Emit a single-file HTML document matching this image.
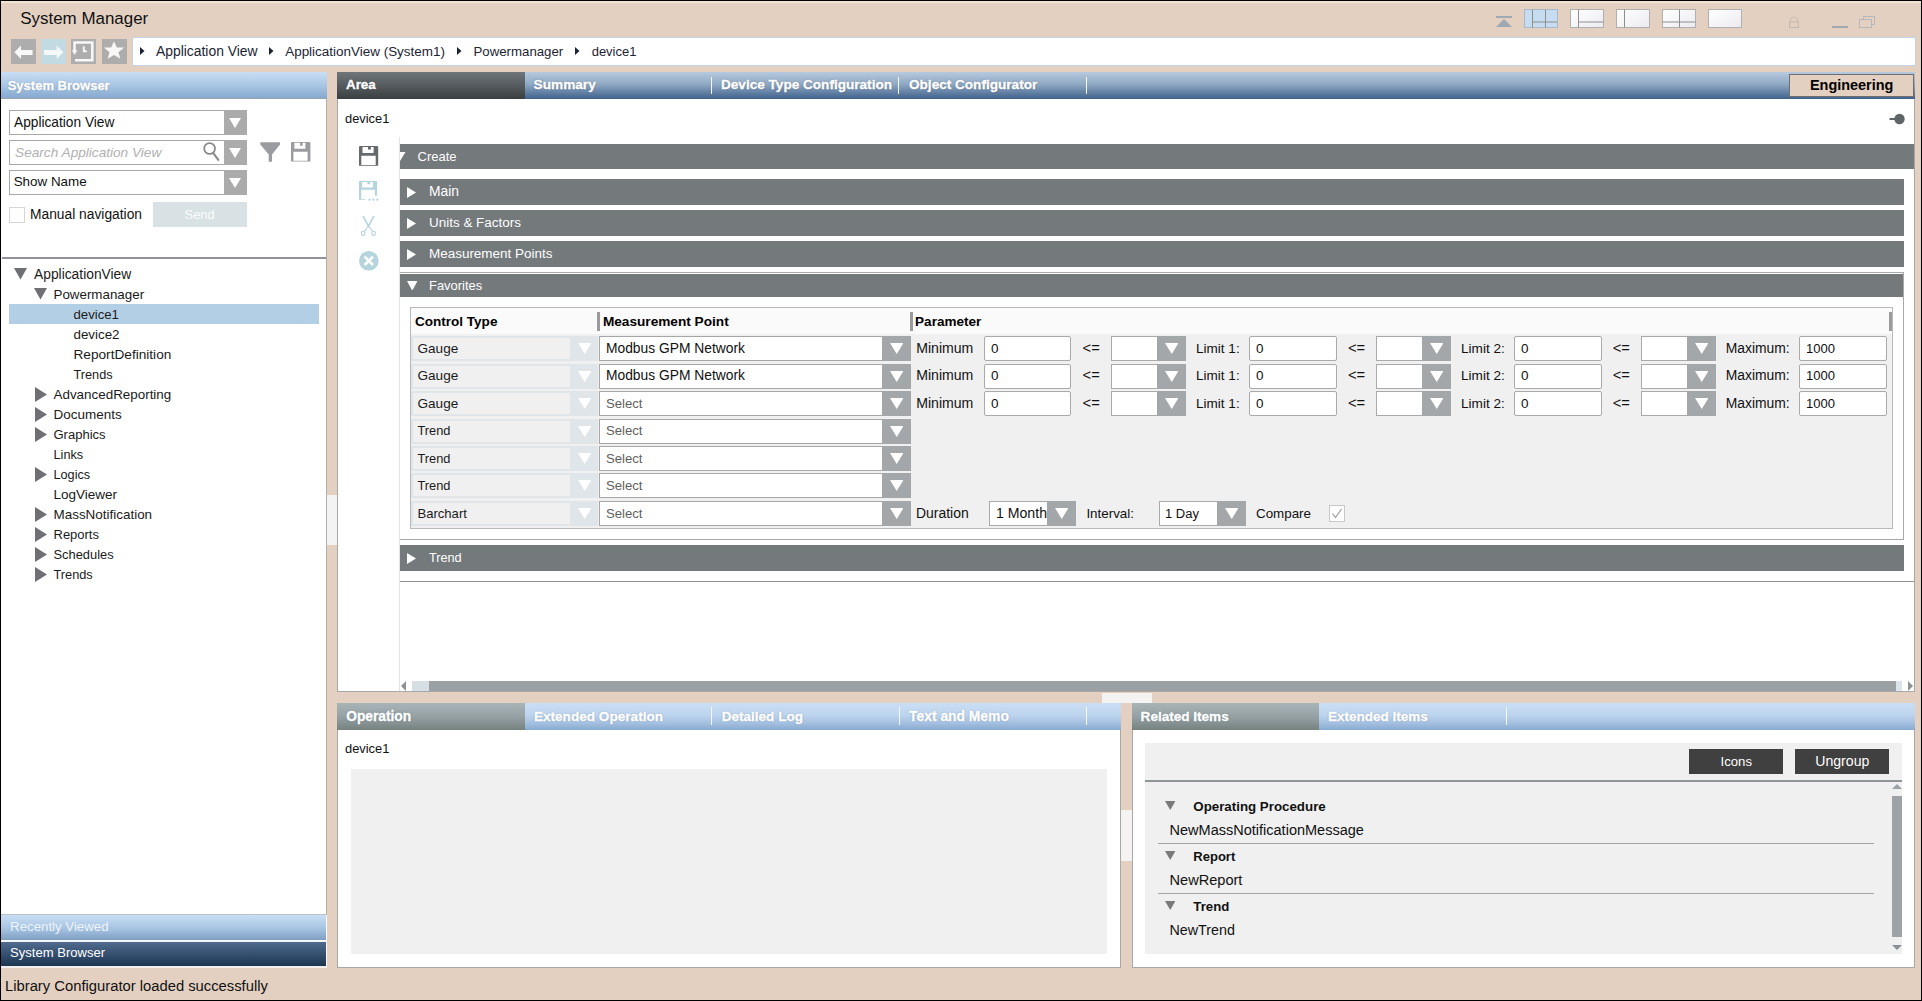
<!DOCTYPE html>
<html><head><meta charset="utf-8"><style>
*{box-sizing:border-box;margin:0;padding:0}
html,body{width:1922px;height:1001px;overflow:hidden}
body{position:relative;background:#e3d0c1;font-family:"Liberation Sans",sans-serif;font-size:14px;color:#1a1a1a}
.a{position:absolute;display:block}
.t{position:absolute;white-space:nowrap}
</style></head><body>
<div class="a" style="left:1px;top:1px;width:1920px;height:2px;background:#f2e2d4"></div>
<div class="t" style="left:20.3px;top:11px;font-size:16.93px;line-height:16.93px;color:#111;">System Manager</div>
<div class="a" style="left:1496px;top:16px;width:16px;height:2px;background:#9fa9b1"></div>
<svg class="a" style="left:1496px;top:19px;" width="16" height="8" viewBox="0 0 16 8"><polygon points="0,8 16,8 8,0" fill="#9fa9b1"/></svg>
<svg class="a" style="left:1524px;top:9px;" width="35" height="19" viewBox="0 0 35 19"><defs><linearGradient id="lg" x1="0" y1="0" x2="1" y2="1"><stop offset="0" stop-color="#ffffff"/><stop offset="1" stop-color="#eceaf0"/></linearGradient></defs><rect x="0.5" y="0.5" width="33" height="18" fill="#c6dcf0" stroke="#a9b9c9" stroke-width="1"/><g transform="translate(0.5,0.5)"><line x1="8" y1="0" x2="8" y2="18" stroke="#8e8e8e" stroke-width="1"/><line x1="21" y1="0" x2="21" y2="18" stroke="#8e8e8e" stroke-width="1"/><line x1="8" y1="12.5" x2="33" y2="12.5" stroke="#8e8e8e" stroke-width="1"/></g></svg>
<svg class="a" style="left:1570px;top:9px;" width="35" height="19" viewBox="0 0 35 19"><defs><linearGradient id="lg" x1="0" y1="0" x2="1" y2="1"><stop offset="0" stop-color="#ffffff"/><stop offset="1" stop-color="#eceaf0"/></linearGradient></defs><rect x="0.5" y="0.5" width="33" height="18" fill="url(#lg)" stroke="#b0b0b0" stroke-width="1"/><g transform="translate(0.5,0.5)"><line x1="8" y1="0" x2="8" y2="18" stroke="#8e8e8e" stroke-width="1"/><line x1="8" y1="12.5" x2="33" y2="12.5" stroke="#8e8e8e" stroke-width="1"/></g></svg>
<svg class="a" style="left:1616px;top:9px;" width="35" height="19" viewBox="0 0 35 19"><defs><linearGradient id="lg" x1="0" y1="0" x2="1" y2="1"><stop offset="0" stop-color="#ffffff"/><stop offset="1" stop-color="#eceaf0"/></linearGradient></defs><rect x="0.5" y="0.5" width="33" height="18" fill="url(#lg)" stroke="#b0b0b0" stroke-width="1"/><g transform="translate(0.5,0.5)"><line x1="8" y1="0" x2="8" y2="18" stroke="#8e8e8e" stroke-width="1"/></g></svg>
<svg class="a" style="left:1662px;top:9px;" width="35" height="19" viewBox="0 0 35 19"><defs><linearGradient id="lg" x1="0" y1="0" x2="1" y2="1"><stop offset="0" stop-color="#ffffff"/><stop offset="1" stop-color="#eceaf0"/></linearGradient></defs><rect x="0.5" y="0.5" width="33" height="18" fill="url(#lg)" stroke="#b0b0b0" stroke-width="1"/><g transform="translate(0.5,0.5)"><line x1="17" y1="0" x2="17" y2="18" stroke="#8e8e8e" stroke-width="1"/><line x1="0" y1="12.5" x2="33" y2="12.5" stroke="#8e8e8e" stroke-width="1"/></g></svg>
<svg class="a" style="left:1708px;top:9px;" width="35" height="19" viewBox="0 0 35 19"><defs><linearGradient id="lg" x1="0" y1="0" x2="1" y2="1"><stop offset="0" stop-color="#ffffff"/><stop offset="1" stop-color="#eceaf0"/></linearGradient></defs><rect x="0.5" y="0.5" width="33" height="18" fill="url(#lg)" stroke="#b0b0b0" stroke-width="1"/><g transform="translate(0.5,0.5)"></g></svg>
<svg class="a" style="left:1789px;top:16px;" width="10" height="12" viewBox="0 0 10 12"><path d="M1.5,6 V4.5 A3.5,3.5 0 0 1 8.5,4.5 V6" fill="none" stroke="#c9bdb3" stroke-width="1"/><rect x="0.5" y="6" width="9" height="5.5" fill="none" stroke="#c4b8ae" stroke-width="1"/></svg>
<div class="a" style="left:1832px;top:26px;width:16px;height:2px;background:#9fa9b1"></div>
<svg class="a" style="left:1859px;top:16px;" width="17" height="12" viewBox="0 0 17 12"><rect x="4.5" y="0.5" width="11" height="8" fill="none" stroke="#b5b9bb" stroke-width="1"/><rect x="0.5" y="3.5" width="12" height="8" fill="#e2d1c3" stroke="#b5b9bb" stroke-width="1"/></svg>
<div class="a" style="left:11px;top:39px;width:25px;height:25px;background:#adadad"></div>
<svg class="a" style="left:11px;top:39px;" width="25" height="25" viewBox="0 0 25 25"><polygon points="3.4,13.3 10,6.6 10,11 21.6,11 21.6,16 10,16 10,20 " fill="#f8f8f8"/></svg>
<div class="a" style="left:41px;top:39px;width:25px;height:25px;background:#c2dbe2"></div>
<svg class="a" style="left:41px;top:39px;" width="25" height="25" viewBox="0 0 25 25"><polygon points="22.3,13.3 15.7,6.6 15.7,11 3,11 3,16 15.7,16 15.7,20 " fill="#f4f8f9"/></svg>
<div class="a" style="left:71px;top:39px;width:25px;height:25px;background:#adadad"></div>
<svg class="a" style="left:71px;top:39px;" width="25" height="25" viewBox="0 0 25 25"><path d="M3.55,12.2 V3.6 H21.3 V21.3 H4" fill="none" stroke="#f8f8f8" stroke-width="2.5"/><path d="M1.4,11.6 H5.7 L3.6,15.3 Z" fill="#f8f8f8" stroke="#f8f8f8" stroke-width="0.8" stroke-linejoin="round"/><path d="M12.8,7.3 V12.2 H15.8" fill="none" stroke="#f8f8f8" stroke-width="1.9"/></svg>
<div class="a" style="left:102px;top:39px;width:25px;height:25px;background:#adadad"></div>
<svg class="a" style="left:102px;top:39px;" width="25" height="25" viewBox="0 0 25 25"><polygon points="12,2.3 14.8,8.4 22.3,8.6 16.4,13.3 18.4,19.8 12,16.1 5.6,19.8 7.6,13.3 1.8,8.6 9.2,8.4" fill="#f8f8f8"/></svg>
<div class="a" style="left:132px;top:37px;width:1784px;height:29px;background:#fff;border:1px solid #c3d3e6"></div>
<svg class="a" style="left:140px;top:47px;" width="5" height="8" viewBox="0 0 5 8"><polygon points="0,0 4.5,4 0,8" fill="#1c2433"/></svg>
<svg class="a" style="left:268.5px;top:47px;" width="5" height="8" viewBox="0 0 5 8"><polygon points="0,0 4.5,4 0,8" fill="#1c2433"/></svg>
<svg class="a" style="left:456.5px;top:47px;" width="5" height="8" viewBox="0 0 5 8"><polygon points="0,0 4.5,4 0,8" fill="#1c2433"/></svg>
<svg class="a" style="left:574.5px;top:47px;" width="5" height="8" viewBox="0 0 5 8"><polygon points="0,0 4.5,4 0,8" fill="#1c2433"/></svg>
<div class="t" style="left:156px;top:45px;font-size:13.88px;line-height:13.88px;color:#1c2433;">Application View</div>
<div class="t" style="left:285.2px;top:45px;font-size:13.46px;line-height:13.46px;color:#1c2433;">ApplicationView (System1)</div>
<div class="t" style="left:473.5px;top:45px;font-size:13.24px;line-height:13.24px;color:#1c2433;">Powermanager</div>
<div class="t" style="left:591.7px;top:46px;font-size:12.97px;line-height:12.97px;color:#1c2433;">device1</div>
<div class="a" style="left:1px;top:72px;width:326px;height:26px;background:linear-gradient(#c9def4,#a6c4e3 55%,#86a9cf)"></div>
<div class="t" style="left:7.7px;top:79px;font-size:13.02px;line-height:13.02px;font-weight:bold;color:#fff;text-shadow:0 0 1.5px rgba(40,60,90,.55);-webkit-text-stroke:0.35px #fff">System Browser</div>
<div class="a" style="left:1px;top:98px;width:326px;height:1px;background:#9aa4ad"></div>
<div class="a" style="left:1px;top:99px;width:325px;height:816px;background:#fff"></div>
<div class="a" style="left:326px;top:99px;width:1px;height:816px;background:#b3aea9"></div>
<div class="a" style="left:326px;top:915px;width:1px;height:53px;background:#fbfbfb"></div>
<div class="a" style="left:9px;top:110px;width:238px;height:25px;background:#fff;border:1px solid #a8a8a8"></div>
<div class="a" style="left:224px;top:110px;width:23px;height:25px;background:#ababab"></div>
<svg class="a" style="left:229px;top:118px;" width="12" height="10" viewBox="0 0 12 10"><polygon points="0,0 12,0 6.0,10" fill="#fff"/></svg>
<div class="t" style="left:14px;top:116px;font-size:13.73px;line-height:13.73px;color:#111;">Application View</div>
<div class="a" style="left:9px;top:140px;width:238px;height:25px;background:#fff;border:1px solid #a8a8a8"></div>
<div class="a" style="left:224px;top:140px;width:23px;height:25px;background:#ababab"></div>
<svg class="a" style="left:229px;top:148px;" width="12" height="10" viewBox="0 0 12 10"><polygon points="0,0 12,0 6.0,10" fill="#fff"/></svg>
<div class="t" style="left:15.1px;top:146px;font-size:13.64px;line-height:13.64px;color:#b0b0b0;font-style:italic">Search Application View</div>
<svg class="a" style="left:201px;top:141px;" width="20" height="22" viewBox="0 0 20 22"><circle cx="8.6" cy="7.5" r="5.4" fill="none" stroke="#8a8a8a" stroke-width="1.8"/><line x1="12" y1="11.6" x2="17.8" y2="19.6" stroke="#8a8a8a" stroke-width="2"/></svg>
<svg class="a" style="left:260px;top:142px;" width="21" height="20" viewBox="0 0 21 20"><polygon points="0.3,0.3 20,0.3 20,2.4 12,12.5 12,19.7 8.7,19.7 8.7,12.5 0.3,2.4" fill="#9a9c9f"/></svg>
<svg class="a" style="left:290.6px;top:142.2px;" width="20" height="20" viewBox="0 0 20 20"><path fill="#9a9c9f" fill-rule="evenodd" d="M0.8,0 H18.6 L19.4,0.8 V19.6 H0 V0.8 Z M3.4,0.8 V6.8 H14.4 V0.8 Z M9.1,0.8 V3.8 H11.6 V0.8 Z M2.4,9.8 V18.8 H16.6 V9.8 Z"/></svg>
<div class="a" style="left:9px;top:170px;width:238px;height:25px;background:#fff;border:1px solid #a8a8a8"></div>
<div class="a" style="left:224px;top:170px;width:23px;height:25px;background:#ababab"></div>
<svg class="a" style="left:229px;top:178px;" width="12" height="10" viewBox="0 0 12 10"><polygon points="0,0 12,0 6.0,10" fill="#fff"/></svg>
<div class="t" style="left:13.7px;top:175px;font-size:13.4px;line-height:13.4px;color:#111;">Show Name</div>
<div class="a" style="left:9px;top:207px;width:16px;height:16px;background:#fff;border:1px solid #d6d6d6"></div>
<div class="t" style="left:30px;top:208px;font-size:13.81px;line-height:13.81px;color:#111;">Manual navigation</div>
<div class="a" style="left:153px;top:202px;width:94px;height:25px;background:#d8e1e4"></div>
<div class="t" style="left:184.6px;top:209px;font-size:12.85px;line-height:12.85px;color:#fcfdfd;">Send</div>
<div class="a" style="left:2px;top:257px;width:324px;height:1.5px;background:#8f9296"></div>
<div class="a" style="left:9px;top:304px;width:310px;height:20px;background:#b3cfe5"></div>
<svg class="a" style="left:14px;top:268px;" width="13" height="11.5" viewBox="0 0 13 11.5"><polygon points="0,0 13,0 6.5,11.5" fill="#6e7073"/></svg>
<div class="t" style="left:34px;top:268px;font-size:13.82px;line-height:13.82px;color:#1a1a1a;">ApplicationView</div>
<svg class="a" style="left:34px;top:288px;" width="13" height="11.5" viewBox="0 0 13 11.5"><polygon points="0,0 13,0 6.5,11.5" fill="#6e7073"/></svg>
<div class="t" style="left:53.5px;top:288px;font-size:13.36px;line-height:13.36px;color:#1a1a1a;">Powermanager</div>
<div class="t" style="left:73.5px;top:308px;font-size:13.17px;line-height:13.17px;color:#1a1a1a;">device1</div>
<div class="t" style="left:73.5px;top:328px;font-size:13.37px;line-height:13.37px;color:#1a1a1a;">device2</div>
<div class="t" style="left:73.5px;top:348px;font-size:13.65px;line-height:13.65px;color:#1a1a1a;">ReportDefinition</div>
<div class="t" style="left:73.5px;top:369px;font-size:12.71px;line-height:12.71px;color:#1a1a1a;">Trends</div>
<svg class="a" style="left:35px;top:386.5px;" width="12" height="15" viewBox="0 0 12 15"><polygon points="0,0 12,7.5 0,15" fill="#6e7073"/></svg>
<div class="t" style="left:53.5px;top:388px;font-size:13.42px;line-height:13.42px;color:#1a1a1a;">AdvancedReporting</div>
<svg class="a" style="left:35px;top:406.5px;" width="12" height="15" viewBox="0 0 12 15"><polygon points="0,0 12,7.5 0,15" fill="#6e7073"/></svg>
<div class="t" style="left:53.5px;top:408px;font-size:13.48px;line-height:13.48px;color:#1a1a1a;">Documents</div>
<svg class="a" style="left:35px;top:426.5px;" width="12" height="15" viewBox="0 0 12 15"><polygon points="0,0 12,7.5 0,15" fill="#6e7073"/></svg>
<div class="t" style="left:53.5px;top:428px;font-size:13.02px;line-height:13.02px;color:#1a1a1a;">Graphics</div>
<div class="t" style="left:53.5px;top:449px;font-size:12.72px;line-height:12.72px;color:#1a1a1a;">Links</div>
<svg class="a" style="left:35px;top:466.5px;" width="12" height="15" viewBox="0 0 12 15"><polygon points="0,0 12,7.5 0,15" fill="#6e7073"/></svg>
<div class="t" style="left:53.5px;top:469px;font-size:12.7px;line-height:12.7px;color:#1a1a1a;">Logics</div>
<div class="t" style="left:53.5px;top:488px;font-size:13.53px;line-height:13.53px;color:#1a1a1a;">LogViewer</div>
<svg class="a" style="left:35px;top:506.5px;" width="12" height="15" viewBox="0 0 12 15"><polygon points="0,0 12,7.5 0,15" fill="#6e7073"/></svg>
<div class="t" style="left:53.5px;top:508px;font-size:13.44px;line-height:13.44px;color:#1a1a1a;">MassNotification</div>
<svg class="a" style="left:35px;top:526.5px;" width="12" height="15" viewBox="0 0 12 15"><polygon points="0,0 12,7.5 0,15" fill="#6e7073"/></svg>
<div class="t" style="left:53.5px;top:528px;font-size:12.99px;line-height:12.99px;color:#1a1a1a;">Reports</div>
<svg class="a" style="left:35px;top:546.5px;" width="12" height="15" viewBox="0 0 12 15"><polygon points="0,0 12,7.5 0,15" fill="#6e7073"/></svg>
<div class="t" style="left:53.5px;top:549px;font-size:12.89px;line-height:12.89px;color:#1a1a1a;">Schedules</div>
<svg class="a" style="left:35px;top:566.5px;" width="12" height="15" viewBox="0 0 12 15"><polygon points="0,0 12,7.5 0,15" fill="#6e7073"/></svg>
<div class="t" style="left:53.5px;top:569px;font-size:12.75px;line-height:12.75px;color:#1a1a1a;">Trends</div>
<div class="a" style="left:327px;top:495px;width:10px;height:50px;background:#f3f3f3"></div>
<div class="a" style="left:1px;top:914px;width:325px;height:1px;background:#b9c1c8"></div>
<div class="a" style="left:1px;top:915px;width:325px;height:25px;background:linear-gradient(#c9def4,#a9c6e4 50%,#7f9fc2)"></div>
<div class="t" style="left:10.1px;top:920px;font-size:13.26px;line-height:13.26px;color:#eef3f8;">Recently Viewed</div>
<div class="a" style="left:1px;top:940px;width:325px;height:2px;background:#f4f6f8"></div>
<div class="a" style="left:1px;top:942px;width:325px;height:24px;background:linear-gradient(#4f6b8f,#36506f 50%,#1c3553)"></div>
<div class="t" style="left:10.1px;top:946px;font-size:13.05px;line-height:13.05px;color:#fff;">System Browser</div>
<div class="a" style="left:1px;top:966px;width:326px;height:2px;background:#f2efec"></div>
<div class="t" style="left:5px;top:979px;font-size:14.79px;line-height:14.79px;color:#111;">Library Configurator loaded successfully</div>
<div class="a" style="left:337px;top:99px;width:1578px;height:593px;background:#fff;border:1px solid #a8a8a8;border-top:none"></div>
<div class="a" style="left:337px;top:72px;width:1578px;height:27px;background:linear-gradient(#b6c9de,#90a9c4 45%,#5c7ba0 80%,#41618a)"></div>
<div class="a" style="left:337px;top:72px;width:188px;height:27px;background:linear-gradient(#6f7679,#555b5e 50%,#393e40)"></div>
<div class="a" style="left:711px;top:77px;width:1px;height:17px;background:#f4f7fa"></div>
<div class="a" style="left:898px;top:77px;width:1px;height:17px;background:#f4f7fa"></div>
<div class="a" style="left:1086px;top:77px;width:1px;height:17px;background:#f4f7fa"></div>
<div class="t" style="left:346px;top:78px;font-size:13.36px;line-height:13.36px;font-weight:bold;color:#fff;text-shadow:0 0 1.5px rgba(20,30,45,.55);-webkit-text-stroke:0.35px #fff">Area</div>
<div class="t" style="left:533.6px;top:78px;font-size:13.65px;line-height:13.65px;font-weight:bold;color:#fff;text-shadow:0 0 1.5px rgba(20,30,45,.55);-webkit-text-stroke:0.35px #fff">Summary</div>
<div class="t" style="left:721px;top:78px;font-size:13.58px;line-height:13.58px;font-weight:bold;color:#fff;text-shadow:0 0 1.5px rgba(20,30,45,.55);-webkit-text-stroke:0.35px #fff">Device Type Configuration</div>
<div class="t" style="left:909px;top:78px;font-size:13.58px;line-height:13.58px;font-weight:bold;color:#fff;text-shadow:0 0 1.5px rgba(20,30,45,.55);-webkit-text-stroke:0.35px #fff">Object Configurator</div>
<div class="a" style="left:1789px;top:74px;width:125px;height:23px;background:#e3d0c1;border:1px solid #6f6f6f"></div>
<div class="t" style="left:1810px;top:78px;font-size:14.43px;line-height:14.43px;font-weight:bold;color:#000;">Engineering</div>
<div class="t" style="left:345px;top:113px;font-size:12.88px;line-height:12.88px;color:#111;">device1</div>
<svg class="a" style="left:1888px;top:113px;" width="17" height="12" viewBox="0 0 17 12"><circle cx="11.5" cy="6" r="5.2" fill="#5f6467"/><rect x="1.5" y="5" width="6" height="2" fill="#5f6467"/></svg>
<div class="a" style="left:399px;top:137px;width:1px;height:554px;background:#e3e3e3"></div>
<svg class="a" style="left:358.9px;top:146px;" width="20" height="20" viewBox="0 0 20 20"><path fill="#666a6c" fill-rule="evenodd" d="M0.8,0 H18.4 L19.2,0.8 V19.8 H0 V0.8 Z M3.5,0.9 V7 H14.6 V0.9 Z M9,0.9 V3.6 H11.9 V0.9 Z M2.3,9.8 V18.9 H16.7 V9.8 Z"/></svg>
<svg class="a" style="left:358.8px;top:181.1px;" width="21" height="21" viewBox="0 0 21 21"><path fill="#b5d5de" fill-rule="evenodd" d="M0.6,0 H17.5 L18.1,0.6 V14.8 H15.9 V8.7 H2.2 V18 H6.3 V18.7 H0 V0.6 Z M3.1,1 V6.4 H13.9 V1 Z M8.4,1 V3.3 H11.1 V1 Z"/><circle cx="10.5" cy="18.7" r="1.1" fill="#b5d5de"/><circle cx="14.4" cy="18.7" r="1.1" fill="#b5d5de"/><circle cx="18.4" cy="18.7" r="1.1" fill="#b5d5de"/></svg>
<svg class="a" style="left:360px;top:215px;" width="17" height="22" viewBox="0 0 17 22"><g fill="#b5d5de"><polygon points="2.2,1 4,1 9.6,11.6 8.3,12.8"/><polygon points="14.8,1 13,1 7.4,11.6 8.7,12.8"/></g><g stroke="#b5d5de" stroke-width="1.1" fill="none"><line x1="7.6" y1="12" x2="4.3" y2="16.6"/><line x1="9.4" y1="12" x2="12.7" y2="16.6"/><rect x="1.5" y="16.3" width="3.4" height="4.1" rx="1.3"/><rect x="11.9" y="16.3" width="3.4" height="4.1" rx="1.3"/></g></svg>
<svg class="a" style="left:358.8px;top:251px;" width="20" height="20" viewBox="0 0 20 20"><circle cx="9.8" cy="9.8" r="9.8" fill="#b5d5de"/><path d="M5.6,5.6 L14,14 M14,5.6 L5.6,14" stroke="#fff" stroke-width="2.7"/></svg>
<div class="a" style="left:400px;top:144px;width:1514px;height:25px;background:#74797c"></div>
<svg class="a" style="left:400px;top:152px;" width="6" height="9" viewBox="0 0 6 9"><polygon points="-6,0 5.5,0 0,9" fill="#fff"/></svg>
<div class="t" style="left:417.6px;top:150px;font-size:12.99px;line-height:12.99px;color:#fff;">Create</div>
<div class="a" style="left:400px;top:179px;width:1504px;height:26px;background:#74797c"></div>
<svg class="a" style="left:407px;top:186.5px;" width="9" height="11" viewBox="0 0 9 11"><polygon points="0,0 9,5.5 0,11" fill="#fff"/></svg>
<div class="t" style="left:429px;top:185px;font-size:13.84px;line-height:13.84px;color:#fff;">Main</div>
<div class="a" style="left:400px;top:210px;width:1504px;height:26px;background:#74797c"></div>
<svg class="a" style="left:407px;top:217.5px;" width="9" height="11" viewBox="0 0 9 11"><polygon points="0,0 9,5.5 0,11" fill="#fff"/></svg>
<div class="t" style="left:429px;top:216px;font-size:13.46px;line-height:13.46px;color:#fff;">Units &amp; Factors</div>
<div class="a" style="left:400px;top:241px;width:1504px;height:26px;background:#74797c"></div>
<svg class="a" style="left:407px;top:248.5px;" width="9" height="11" viewBox="0 0 9 11"><polygon points="0,0 9,5.5 0,11" fill="#fff"/></svg>
<div class="t" style="left:429px;top:247px;font-size:13.46px;line-height:13.46px;color:#fff;">Measurement Points</div>
<div class="a" style="left:400px;top:272px;width:1504px;height:268px;background:#fff;border:1px solid #a9a9a9;border-left:none"></div>
<div class="a" style="left:400px;top:274px;width:1503px;height:23px;background:#74797c"></div>
<svg class="a" style="left:406.5px;top:280.7px;" width="10.5" height="9.6" viewBox="0 0 10.5 9.6"><polygon points="0,0 10.5,0 5.25,9.6" fill="#fff"/></svg>
<div class="t" style="left:429px;top:280px;font-size:12.94px;line-height:12.94px;color:#fff;">Favorites</div>
<div class="a" style="left:410px;top:307px;width:1483px;height:222px;background:#f0f0f0;border:1px solid #b9b9b9"></div>
<div class="a" style="left:411px;top:308px;width:1481px;height:26px;background:#fafafa"></div>
<div class="a" style="left:597px;top:312px;width:3px;height:19px;background:#9b9b9b"></div>
<div class="a" style="left:910px;top:312px;width:3px;height:19px;background:#9b9b9b"></div>
<div class="a" style="left:1889px;top:312px;width:3px;height:19px;background:#9b9b9b"></div>
<div class="t" style="left:414.9px;top:315px;font-size:13.56px;line-height:13.56px;font-weight:bold;color:#000;">Control Type</div>
<div class="t" style="left:602.9px;top:315px;font-size:13.65px;line-height:13.65px;font-weight:bold;color:#000;">Measurement Point</div>
<div class="t" style="left:915.1px;top:315px;font-size:13.53px;line-height:13.53px;font-weight:bold;color:#000;">Parameter</div>
<div class="a" style="left:411px;top:336px;width:187px;height:25px;background:#dfe5e8"></div>
<div class="a" style="left:413px;top:338px;width:157px;height:21px;background:#f0f0f0"></div>
<svg class="a" style="left:577.5px;top:343px;" width="13.5" height="11" viewBox="0 0 13.5 11"><polygon points="0,0 13.5,0 6.75,11" fill="#fff"/></svg>
<div class="t" style="left:417.5px;top:342px;font-size:13.59px;line-height:13.59px;color:#1a1a1a;">Gauge</div>
<div class="a" style="left:599px;top:336px;width:312px;height:25px;background:#fff;border:1px solid #a6a6a6"></div>
<div class="a" style="left:882px;top:336px;width:29px;height:25px;background:#a3a7a9"></div>
<svg class="a" style="left:889.75px;top:343px;" width="13.5" height="11" viewBox="0 0 13.5 11"><polygon points="0,0 13.5,0 6.75,11" fill="#fff"/></svg>
<div class="t" style="left:606px;top:342px;font-size:13.82px;line-height:13.82px;color:#111;">Modbus GPM Network</div>
<div class="t" style="left:916.2px;top:341px;font-size:14.1px;line-height:14.1px;color:#111;">Minimum</div>
<div class="a" style="left:984px;top:336px;width:87px;height:25px;background:#fff;border:1px solid #aaa;border-radius:2px"></div>
<div class="t" style="left:991px;top:342px;font-size:13.48px;line-height:13.48px;color:#111;">0</div>
<div class="t" style="left:1082.6px;top:341px;font-size:14.73px;line-height:14.73px;color:#111;">&lt;=</div>
<div class="a" style="left:1111px;top:336px;width:75px;height:25px;background:#fff;border:1px solid #aaa"></div>
<div class="a" style="left:1157px;top:336px;width:29px;height:25px;background:#a3a7a9"></div>
<svg class="a" style="left:1164.75px;top:343px;" width="13.5" height="11" viewBox="0 0 13.5 11"><polygon points="0,0 13.5,0 6.75,11" fill="#fff"/></svg>
<div class="t" style="left:1196px;top:342px;font-size:13.56px;line-height:13.56px;color:#111;">Limit 1:</div>
<div class="a" style="left:1249px;top:336px;width:88px;height:25px;background:#fff;border:1px solid #aaa;border-radius:2px"></div>
<div class="t" style="left:1256px;top:342px;font-size:13.48px;line-height:13.48px;color:#111;">0</div>
<div class="t" style="left:1348px;top:341px;font-size:14.73px;line-height:14.73px;color:#111;">&lt;=</div>
<div class="a" style="left:1376px;top:336px;width:75px;height:25px;background:#fff;border:1px solid #aaa"></div>
<div class="a" style="left:1422px;top:336px;width:29px;height:25px;background:#a3a7a9"></div>
<svg class="a" style="left:1429.75px;top:343px;" width="13.5" height="11" viewBox="0 0 13.5 11"><polygon points="0,0 13.5,0 6.75,11" fill="#fff"/></svg>
<div class="t" style="left:1461px;top:342px;font-size:13.59px;line-height:13.59px;color:#111;">Limit 2:</div>
<div class="a" style="left:1514px;top:336px;width:88px;height:25px;background:#fff;border:1px solid #aaa;border-radius:2px"></div>
<div class="t" style="left:1521px;top:342px;font-size:13.48px;line-height:13.48px;color:#111;">0</div>
<div class="t" style="left:1612.7px;top:341px;font-size:14.73px;line-height:14.73px;color:#111;">&lt;=</div>
<div class="a" style="left:1641px;top:336px;width:75px;height:25px;background:#fff;border:1px solid #aaa"></div>
<div class="a" style="left:1687px;top:336px;width:29px;height:25px;background:#a3a7a9"></div>
<svg class="a" style="left:1694.75px;top:343px;" width="13.5" height="11" viewBox="0 0 13.5 11"><polygon points="0,0 13.5,0 6.75,11" fill="#fff"/></svg>
<div class="t" style="left:1725.7px;top:342px;font-size:13.88px;line-height:13.88px;color:#111;">Maximum:</div>
<div class="a" style="left:1799px;top:336px;width:88px;height:25px;background:#fff;border:1px solid #aaa;border-radius:2px"></div>
<div class="t" style="left:1806px;top:342px;font-size:13.04px;line-height:13.04px;color:#111;">1000</div>
<div class="a" style="left:411px;top:364px;width:187px;height:25px;background:#dfe5e8"></div>
<div class="a" style="left:413px;top:366px;width:157px;height:21px;background:#f0f0f0"></div>
<svg class="a" style="left:577.5px;top:371px;" width="13.5" height="11" viewBox="0 0 13.5 11"><polygon points="0,0 13.5,0 6.75,11" fill="#fff"/></svg>
<div class="t" style="left:417.5px;top:369px;font-size:13.59px;line-height:13.59px;color:#1a1a1a;">Gauge</div>
<div class="a" style="left:599px;top:364px;width:312px;height:25px;background:#fff;border:1px solid #a6a6a6"></div>
<div class="a" style="left:882px;top:364px;width:29px;height:25px;background:#a3a7a9"></div>
<svg class="a" style="left:889.75px;top:371px;" width="13.5" height="11" viewBox="0 0 13.5 11"><polygon points="0,0 13.5,0 6.75,11" fill="#fff"/></svg>
<div class="t" style="left:606px;top:369px;font-size:13.82px;line-height:13.82px;color:#111;">Modbus GPM Network</div>
<div class="t" style="left:916.2px;top:368px;font-size:14.1px;line-height:14.1px;color:#111;">Minimum</div>
<div class="a" style="left:984px;top:364px;width:87px;height:25px;background:#fff;border:1px solid #aaa;border-radius:2px"></div>
<div class="t" style="left:991px;top:369px;font-size:13.48px;line-height:13.48px;color:#111;">0</div>
<div class="t" style="left:1082.6px;top:368px;font-size:14.73px;line-height:14.73px;color:#111;">&lt;=</div>
<div class="a" style="left:1111px;top:364px;width:75px;height:25px;background:#fff;border:1px solid #aaa"></div>
<div class="a" style="left:1157px;top:364px;width:29px;height:25px;background:#a3a7a9"></div>
<svg class="a" style="left:1164.75px;top:371px;" width="13.5" height="11" viewBox="0 0 13.5 11"><polygon points="0,0 13.5,0 6.75,11" fill="#fff"/></svg>
<div class="t" style="left:1196px;top:369px;font-size:13.56px;line-height:13.56px;color:#111;">Limit 1:</div>
<div class="a" style="left:1249px;top:364px;width:88px;height:25px;background:#fff;border:1px solid #aaa;border-radius:2px"></div>
<div class="t" style="left:1256px;top:369px;font-size:13.48px;line-height:13.48px;color:#111;">0</div>
<div class="t" style="left:1348px;top:368px;font-size:14.73px;line-height:14.73px;color:#111;">&lt;=</div>
<div class="a" style="left:1376px;top:364px;width:75px;height:25px;background:#fff;border:1px solid #aaa"></div>
<div class="a" style="left:1422px;top:364px;width:29px;height:25px;background:#a3a7a9"></div>
<svg class="a" style="left:1429.75px;top:371px;" width="13.5" height="11" viewBox="0 0 13.5 11"><polygon points="0,0 13.5,0 6.75,11" fill="#fff"/></svg>
<div class="t" style="left:1461px;top:369px;font-size:13.59px;line-height:13.59px;color:#111;">Limit 2:</div>
<div class="a" style="left:1514px;top:364px;width:88px;height:25px;background:#fff;border:1px solid #aaa;border-radius:2px"></div>
<div class="t" style="left:1521px;top:369px;font-size:13.48px;line-height:13.48px;color:#111;">0</div>
<div class="t" style="left:1612.7px;top:368px;font-size:14.73px;line-height:14.73px;color:#111;">&lt;=</div>
<div class="a" style="left:1641px;top:364px;width:75px;height:25px;background:#fff;border:1px solid #aaa"></div>
<div class="a" style="left:1687px;top:364px;width:29px;height:25px;background:#a3a7a9"></div>
<svg class="a" style="left:1694.75px;top:371px;" width="13.5" height="11" viewBox="0 0 13.5 11"><polygon points="0,0 13.5,0 6.75,11" fill="#fff"/></svg>
<div class="t" style="left:1725.7px;top:369px;font-size:13.88px;line-height:13.88px;color:#111;">Maximum:</div>
<div class="a" style="left:1799px;top:364px;width:88px;height:25px;background:#fff;border:1px solid #aaa;border-radius:2px"></div>
<div class="t" style="left:1806px;top:369px;font-size:13.04px;line-height:13.04px;color:#111;">1000</div>
<div class="a" style="left:411px;top:391px;width:187px;height:25px;background:#dfe5e8"></div>
<div class="a" style="left:413px;top:393px;width:157px;height:21px;background:#f0f0f0"></div>
<svg class="a" style="left:577.5px;top:398px;" width="13.5" height="11" viewBox="0 0 13.5 11"><polygon points="0,0 13.5,0 6.75,11" fill="#fff"/></svg>
<div class="t" style="left:417.5px;top:397px;font-size:13.59px;line-height:13.59px;color:#1a1a1a;">Gauge</div>
<div class="a" style="left:599px;top:391px;width:312px;height:25px;background:#fff;border:1px solid #a6a6a6"></div>
<div class="a" style="left:882px;top:391px;width:29px;height:25px;background:#a3a7a9"></div>
<svg class="a" style="left:889.75px;top:398px;" width="13.5" height="11" viewBox="0 0 13.5 11"><polygon points="0,0 13.5,0 6.75,11" fill="#fff"/></svg>
<div class="t" style="left:606px;top:397px;font-size:13.13px;line-height:13.13px;color:#606060;">Select</div>
<div class="t" style="left:916.2px;top:396px;font-size:14.1px;line-height:14.1px;color:#111;">Minimum</div>
<div class="a" style="left:984px;top:391px;width:87px;height:25px;background:#fff;border:1px solid #aaa;border-radius:2px"></div>
<div class="t" style="left:991px;top:397px;font-size:13.48px;line-height:13.48px;color:#111;">0</div>
<div class="t" style="left:1082.6px;top:396px;font-size:14.73px;line-height:14.73px;color:#111;">&lt;=</div>
<div class="a" style="left:1111px;top:391px;width:75px;height:25px;background:#fff;border:1px solid #aaa"></div>
<div class="a" style="left:1157px;top:391px;width:29px;height:25px;background:#a3a7a9"></div>
<svg class="a" style="left:1164.75px;top:398px;" width="13.5" height="11" viewBox="0 0 13.5 11"><polygon points="0,0 13.5,0 6.75,11" fill="#fff"/></svg>
<div class="t" style="left:1196px;top:397px;font-size:13.56px;line-height:13.56px;color:#111;">Limit 1:</div>
<div class="a" style="left:1249px;top:391px;width:88px;height:25px;background:#fff;border:1px solid #aaa;border-radius:2px"></div>
<div class="t" style="left:1256px;top:397px;font-size:13.48px;line-height:13.48px;color:#111;">0</div>
<div class="t" style="left:1348px;top:396px;font-size:14.73px;line-height:14.73px;color:#111;">&lt;=</div>
<div class="a" style="left:1376px;top:391px;width:75px;height:25px;background:#fff;border:1px solid #aaa"></div>
<div class="a" style="left:1422px;top:391px;width:29px;height:25px;background:#a3a7a9"></div>
<svg class="a" style="left:1429.75px;top:398px;" width="13.5" height="11" viewBox="0 0 13.5 11"><polygon points="0,0 13.5,0 6.75,11" fill="#fff"/></svg>
<div class="t" style="left:1461px;top:397px;font-size:13.59px;line-height:13.59px;color:#111;">Limit 2:</div>
<div class="a" style="left:1514px;top:391px;width:88px;height:25px;background:#fff;border:1px solid #aaa;border-radius:2px"></div>
<div class="t" style="left:1521px;top:397px;font-size:13.48px;line-height:13.48px;color:#111;">0</div>
<div class="t" style="left:1612.7px;top:396px;font-size:14.73px;line-height:14.73px;color:#111;">&lt;=</div>
<div class="a" style="left:1641px;top:391px;width:75px;height:25px;background:#fff;border:1px solid #aaa"></div>
<div class="a" style="left:1687px;top:391px;width:29px;height:25px;background:#a3a7a9"></div>
<svg class="a" style="left:1694.75px;top:398px;" width="13.5" height="11" viewBox="0 0 13.5 11"><polygon points="0,0 13.5,0 6.75,11" fill="#fff"/></svg>
<div class="t" style="left:1725.7px;top:397px;font-size:13.88px;line-height:13.88px;color:#111;">Maximum:</div>
<div class="a" style="left:1799px;top:391px;width:88px;height:25px;background:#fff;border:1px solid #aaa;border-radius:2px"></div>
<div class="t" style="left:1806px;top:397px;font-size:13.04px;line-height:13.04px;color:#111;">1000</div>
<div class="a" style="left:411px;top:419px;width:187px;height:25px;background:#dfe5e8"></div>
<div class="a" style="left:413px;top:421px;width:157px;height:21px;background:#f0f0f0"></div>
<svg class="a" style="left:577.5px;top:426px;" width="13.5" height="11" viewBox="0 0 13.5 11"><polygon points="0,0 13.5,0 6.75,11" fill="#fff"/></svg>
<div class="t" style="left:417.5px;top:425px;font-size:12.81px;line-height:12.81px;color:#1a1a1a;">Trend</div>
<div class="a" style="left:599px;top:419px;width:312px;height:25px;background:#fff;border:1px solid #a6a6a6"></div>
<div class="a" style="left:882px;top:419px;width:29px;height:25px;background:#a3a7a9"></div>
<svg class="a" style="left:889.75px;top:426px;" width="13.5" height="11" viewBox="0 0 13.5 11"><polygon points="0,0 13.5,0 6.75,11" fill="#fff"/></svg>
<div class="t" style="left:606px;top:424px;font-size:13.13px;line-height:13.13px;color:#606060;">Select</div>
<div class="a" style="left:411px;top:446px;width:187px;height:25px;background:#dfe5e8"></div>
<div class="a" style="left:413px;top:448px;width:157px;height:21px;background:#f0f0f0"></div>
<svg class="a" style="left:577.5px;top:453px;" width="13.5" height="11" viewBox="0 0 13.5 11"><polygon points="0,0 13.5,0 6.75,11" fill="#fff"/></svg>
<div class="t" style="left:417.5px;top:453px;font-size:12.81px;line-height:12.81px;color:#1a1a1a;">Trend</div>
<div class="a" style="left:599px;top:446px;width:312px;height:25px;background:#fff;border:1px solid #a6a6a6"></div>
<div class="a" style="left:882px;top:446px;width:29px;height:25px;background:#a3a7a9"></div>
<svg class="a" style="left:889.75px;top:453px;" width="13.5" height="11" viewBox="0 0 13.5 11"><polygon points="0,0 13.5,0 6.75,11" fill="#fff"/></svg>
<div class="t" style="left:606px;top:452px;font-size:13.13px;line-height:13.13px;color:#606060;">Select</div>
<div class="a" style="left:411px;top:473px;width:187px;height:25px;background:#dfe5e8"></div>
<div class="a" style="left:413px;top:475px;width:157px;height:21px;background:#f0f0f0"></div>
<svg class="a" style="left:577.5px;top:480px;" width="13.5" height="11" viewBox="0 0 13.5 11"><polygon points="0,0 13.5,0 6.75,11" fill="#fff"/></svg>
<div class="t" style="left:417.5px;top:480px;font-size:12.81px;line-height:12.81px;color:#1a1a1a;">Trend</div>
<div class="a" style="left:599px;top:473px;width:312px;height:25px;background:#fff;border:1px solid #a6a6a6"></div>
<div class="a" style="left:882px;top:473px;width:29px;height:25px;background:#a3a7a9"></div>
<svg class="a" style="left:889.75px;top:480px;" width="13.5" height="11" viewBox="0 0 13.5 11"><polygon points="0,0 13.5,0 6.75,11" fill="#fff"/></svg>
<div class="t" style="left:606px;top:479px;font-size:13.13px;line-height:13.13px;color:#606060;">Select</div>
<div class="a" style="left:411px;top:501px;width:187px;height:25px;background:#dfe5e8"></div>
<div class="a" style="left:413px;top:503px;width:157px;height:21px;background:#f0f0f0"></div>
<svg class="a" style="left:577.5px;top:508px;" width="13.5" height="11" viewBox="0 0 13.5 11"><polygon points="0,0 13.5,0 6.75,11" fill="#fff"/></svg>
<div class="t" style="left:417.5px;top:507px;font-size:13.07px;line-height:13.07px;color:#1a1a1a;">Barchart</div>
<div class="a" style="left:599px;top:501px;width:312px;height:25px;background:#fff;border:1px solid #a6a6a6"></div>
<div class="a" style="left:882px;top:501px;width:29px;height:25px;background:#a3a7a9"></div>
<svg class="a" style="left:889.75px;top:508px;" width="13.5" height="11" viewBox="0 0 13.5 11"><polygon points="0,0 13.5,0 6.75,11" fill="#fff"/></svg>
<div class="t" style="left:606px;top:507px;font-size:13.13px;line-height:13.13px;color:#606060;">Select</div>
<div class="t" style="left:916px;top:507px;font-size:13.94px;line-height:13.94px;color:#111;">Duration</div>
<div class="a" style="left:989px;top:501px;width:87px;height:25px;background:#fff;border:1px solid #aaa"></div>
<div class="t" style="left:996px;top:506px;font-size:14.11px;line-height:14.11px;color:#111;">1 Month</div>
<div class="a" style="left:1047px;top:501px;width:29px;height:25px;background:#a3a7a9"></div>
<svg class="a" style="left:1054.75px;top:508px;" width="13.5" height="11" viewBox="0 0 13.5 11"><polygon points="0,0 13.5,0 6.75,11" fill="#fff"/></svg>
<div class="t" style="left:1086.4px;top:507px;font-size:13.38px;line-height:13.38px;color:#111;">Interval:</div>
<div class="a" style="left:1159px;top:501px;width:87px;height:25px;background:#fff;border:1px solid #aaa"></div>
<div class="t" style="left:1165px;top:507px;font-size:13.02px;line-height:13.02px;color:#111;">1 Day</div>
<div class="a" style="left:1217px;top:501px;width:29px;height:25px;background:#a3a7a9"></div>
<svg class="a" style="left:1224.75px;top:508px;" width="13.5" height="11" viewBox="0 0 13.5 11"><polygon points="0,0 13.5,0 6.75,11" fill="#fff"/></svg>
<div class="t" style="left:1256px;top:507px;font-size:13.37px;line-height:13.37px;color:#111;">Compare</div>
<div class="a" style="left:1329px;top:504.5px;width:16px;height:17px;background:#fff;border:1px solid #c8c8c8"></div>
<svg class="a" style="left:1331px;top:508px;" width="12" height="11" viewBox="0 0 12 11"><path d="M1.5,5.5 L4.5,9.5 L10.5,1" fill="none" stroke="#9a9a9a" stroke-width="1.2"/></svg>
<div class="a" style="left:400px;top:545px;width:1504px;height:26px;background:#74797c"></div>
<svg class="a" style="left:407px;top:552.5px;" width="9" height="11" viewBox="0 0 9 11"><polygon points="0,0 9,5.5 0,11" fill="#fff"/></svg>
<div class="t" style="left:429px;top:552px;font-size:12.7px;line-height:12.7px;color:#fff;">Trend</div>
<div class="a" style="left:400px;top:581px;width:1514px;height:1px;background:#939393"></div>
<svg class="a" style="left:401px;top:681px;" width="5" height="10" viewBox="0 0 5 10"><polygon points="5,0 5,10 0,5" fill="#8c9194"/></svg>
<div class="a" style="left:412px;top:681px;width:17px;height:10px;background:#d6e0e4"></div>
<div class="a" style="left:429px;top:681px;width:1467px;height:10px;background:#9ba0a4"></div>
<div class="a" style="left:1896px;top:681px;width:6px;height:10px;background:#dbe4e8"></div>
<svg class="a" style="left:1908px;top:681px;" width="5" height="10" viewBox="0 0 5 10"><polygon points="0,0 0,10 5,5" fill="#8c9194"/></svg>
<div class="a" style="left:1102px;top:693px;width:50px;height:10px;background:#f5f3f1"></div>
<div class="a" style="left:337px;top:730px;width:784px;height:238px;background:#fff;border:1px solid #a8a8a8;border-top:none"></div>
<div class="a" style="left:337px;top:703px;width:784px;height:27px;background:linear-gradient(#cadff4,#bdd4ee 45%,#a4c0e0 75%,#87a9d0)"></div>
<div class="a" style="left:337px;top:703px;width:188px;height:27px;background:linear-gradient(#a9b4b7,#95a1a4 50%,#76827f)"></div>
<div class="a" style="left:711px;top:707px;width:1px;height:18px;background:#f4f8fc"></div>
<div class="a" style="left:899px;top:707px;width:1px;height:18px;background:#f4f8fc"></div>
<div class="a" style="left:1086px;top:707px;width:1px;height:18px;background:#f4f8fc"></div>
<div class="t" style="left:346.2px;top:710px;font-size:13.76px;line-height:13.76px;font-weight:bold;color:#fff;text-shadow:0 0 1.5px rgba(40,60,90,.5);-webkit-text-stroke:0.35px #fff">Operation</div>
<div class="t" style="left:533.9px;top:710px;font-size:13.6px;line-height:13.6px;font-weight:bold;color:#fff;text-shadow:0 0 1.5px rgba(40,60,90,.5);-webkit-text-stroke:0.35px #fff">Extended Operation</div>
<div class="t" style="left:721.8px;top:710px;font-size:13.53px;line-height:13.53px;font-weight:bold;color:#fff;text-shadow:0 0 1.5px rgba(40,60,90,.5);-webkit-text-stroke:0.35px #fff">Detailed Log</div>
<div class="t" style="left:909.1px;top:710px;font-size:13.85px;line-height:13.85px;font-weight:bold;color:#fff;text-shadow:0 0 1.5px rgba(40,60,90,.5);-webkit-text-stroke:0.35px #fff">Text and Memo</div>
<div class="t" style="left:345px;top:743px;font-size:12.88px;line-height:12.88px;color:#111;">device1</div>
<div class="a" style="left:351px;top:769px;width:756px;height:185px;background:#f0f0f0"></div>
<div class="a" style="left:1121px;top:810px;width:11px;height:51px;background:#f5f3f1"></div>
<div class="a" style="left:1132px;top:730px;width:783px;height:238px;background:#fff;border:1px solid #a8a8a8;border-top:none"></div>
<div class="a" style="left:1132px;top:703px;width:783px;height:27px;background:linear-gradient(#cadff4,#bdd4ee 45%,#a4c0e0 75%,#87a9d0)"></div>
<div class="a" style="left:1132px;top:703px;width:187px;height:27px;background:linear-gradient(#a9b4b7,#95a1a4 50%,#76827f)"></div>
<div class="a" style="left:1506px;top:707px;width:1px;height:18px;background:#f4f8fc"></div>
<div class="t" style="left:1140.6px;top:710px;font-size:13.56px;line-height:13.56px;font-weight:bold;color:#fff;text-shadow:0 0 1.5px rgba(40,60,90,.5);-webkit-text-stroke:0.35px #fff">Related Items</div>
<div class="t" style="left:1328.1px;top:710px;font-size:13.5px;line-height:13.5px;font-weight:bold;color:#fff;text-shadow:0 0 1.5px rgba(40,60,90,.5);-webkit-text-stroke:0.35px #fff">Extended Items</div>
<div class="a" style="left:1145px;top:743px;width:757px;height:211px;background:#f0f0f0"></div>
<div class="a" style="left:1689px;top:749px;width:94px;height:25px;background:#404040"></div>
<div class="t" style="left:1720.5px;top:755px;font-size:13.18px;line-height:13.18px;color:#fff;">Icons</div>
<div class="a" style="left:1795px;top:749px;width:94px;height:25px;background:#404040"></div>
<div class="t" style="left:1815.3px;top:754px;font-size:14.08px;line-height:14.08px;color:#fff;">Ungroup</div>
<div class="a" style="left:1145px;top:780px;width:757px;height:2px;background:#8f9497"></div>
<svg class="a" style="left:1164.5px;top:800.8px;" width="10.5" height="9" viewBox="0 0 10.5 9"><polygon points="0,0 10.5,0 5.25,9" fill="#7a7a7a"/></svg>
<div class="t" style="left:1193.3px;top:800px;font-size:13.32px;line-height:13.32px;font-weight:bold;color:#111;">Operating Procedure</div>
<div class="t" style="left:1169.5px;top:823px;font-size:14.52px;line-height:14.52px;color:#111;">NewMassNotificationMessage</div>
<div class="a" style="left:1158px;top:843px;width:716px;height:1px;background:#a3a3a3"></div>
<svg class="a" style="left:1164.5px;top:851px;" width="10.5" height="9" viewBox="0 0 10.5 9"><polygon points="0,0 10.5,0 5.25,9" fill="#7a7a7a"/></svg>
<div class="t" style="left:1193.3px;top:850px;font-size:13.03px;line-height:13.03px;font-weight:bold;color:#111;">Report</div>
<div class="t" style="left:1169.5px;top:873px;font-size:14.59px;line-height:14.59px;color:#111;">NewReport</div>
<div class="a" style="left:1158px;top:893px;width:716px;height:1px;background:#a3a3a3"></div>
<svg class="a" style="left:1164.5px;top:901px;" width="10.5" height="9" viewBox="0 0 10.5 9"><polygon points="0,0 10.5,0 5.25,9" fill="#7a7a7a"/></svg>
<div class="t" style="left:1193.3px;top:900px;font-size:13.22px;line-height:13.22px;font-weight:bold;color:#111;">Trend</div>
<div class="t" style="left:1169.5px;top:923px;font-size:14.31px;line-height:14.31px;color:#111;">NewTrend</div>
<svg class="a" style="left:1892px;top:784px;" width="10" height="5" viewBox="0 0 10 5"><polygon points="0,5 10,5 5,0" fill="#9ca2a6"/></svg>
<div class="a" style="left:1892px;top:796px;width:10px;height:141px;background:#9ca2a6"></div>
<svg class="a" style="left:1892px;top:945px;" width="10" height="5" viewBox="0 0 10 5"><polygon points="0,0 10,0 5,5" fill="#8a8f93"/></svg>
<div class="a" style="left:0;top:0;width:1922px;height:1001px;border:1px solid #000;z-index:50"></div>
</body></html>
